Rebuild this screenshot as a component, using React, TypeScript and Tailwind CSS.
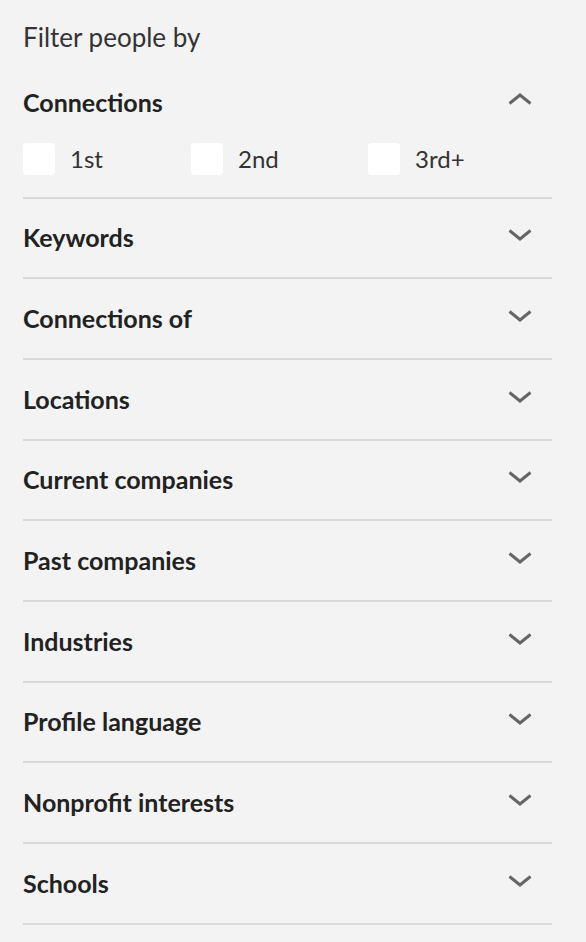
import { useState } from "react";

const sections = [
  { label: "Keywords", h: "h-[80px]" },
  { label: "Connections of", h: "h-[81px]" },
  { label: "Locations", h: "h-[81px]" },
  { label: "Current companies", h: "h-[80px]" },
  { label: "Past companies", h: "h-[81px]" },
  { label: "Industries", h: "h-[81px]" },
  { label: "Profile language", h: "h-[80px]" },
  { label: "Nonprofit interests", h: "h-[81px]" },
  { label: "Schools", h: "h-[81px]" },
];

function Chevron({ up = false }: { up?: boolean }) {
  return (
    <svg viewBox="0 0 24 12" className="h-[12px] w-[24px]" fill="none">
      <path
        d={up ? "M1.5 10.5 12 2l10.5 8.5" : "M1.5 1.5 12 10l10.5-8.5"}
        stroke="#666666"
        strokeWidth={3}
      />
    </svg>
  );
}

function Checkbox({ label, checked, onToggle }: { label: string; checked: boolean; onToggle: () => void }) {
  return (
    <label className="flex cursor-pointer items-center gap-[15px]" onClick={onToggle}>
      <span
        className={`h-[32px] w-[32px] rounded-[4px] ${checked ? "bg-[#0073b1]" : "bg-white"}`}
      />
      <span className="text-[24px] text-[#333333]">{label}</span>
    </label>
  );
}

export default function App() {
  const [picked, setPicked] = useState<Record<string, boolean>>({});
  const toggle = (k: string) => setPicked((p) => ({ ...p, [k]: !p[k] }));

  return (
    <div
      className="min-h-screen bg-[#f3f3f3] pl-[23px] pr-[34px]"
      style={{ fontFamily: "Lato, 'Noto Sans', sans-serif" }}
    >
      <div className="border-b-2 border-[#d9d9d9] pt-[21px]">
        <h3 className="text-[26px] leading-[32px] text-[#333333]">Filter people by</h3>
        <div className="mt-[33px] flex items-center justify-between">
          <span className="text-[25px] font-bold leading-[32px] text-[#222222]">Connections</span>
          <span className="mr-[20px] -mt-[6px]">
            <Chevron up />
          </span>
        </div>
        <div className="mt-[23px] flex pb-[20px]">
          <div className="w-[168px]">
            <Checkbox label="1st" checked={!!picked["1st"]} onToggle={() => toggle("1st")} />
          </div>
          <div className="w-[177px]">
            <Checkbox label="2nd" checked={!!picked["2nd"]} onToggle={() => toggle("2nd")} />
          </div>
          <Checkbox label="3rd+" checked={!!picked["3rd"]} onToggle={() => toggle("3rd")} />
        </div>
      </div>

      {sections.map((s) => (
        <div
          key={s.label}
          className={`flex ${s.h} items-center justify-between border-b-2 border-[#d9d9d9]`}
        >
          <span className="text-[25px] font-bold text-[#222222]">{s.label}</span>
          <span className="mr-[20px] -mt-[6px]">
            <Chevron />
          </span>
        </div>
      ))}
    </div>
  );
}
